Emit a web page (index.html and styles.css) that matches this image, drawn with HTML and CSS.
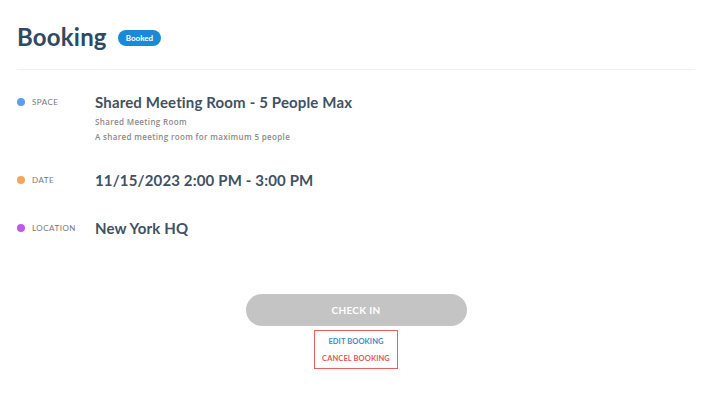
FILE: index.html
```html
<!DOCTYPE html>
<html>
<head>
<meta charset="utf-8">
<link rel="stylesheet" href="styles.css">
</head>
<body>
<div class="page">
  <header class="head">
    <h1 class="title">Booking</h1>
    <span class="badge">Booked</span>
  </header>
  <div class="rows">
    <div class="row row-space">
      <div class="label"><span class="dot dot-blue"></span><span class="label-text">SPACE</span></div>
      <div class="value">
        <div class="main">Shared Meeting Room - 5 People Max</div>
        <div class="sub first">Shared Meeting Room</div>
        <div class="sub">A shared meeting room for maximum 5 people</div>
      </div>
    </div>
    <div class="row row-date">
      <div class="label"><span class="dot dot-orange"></span><span class="label-text">DATE</span></div>
      <div class="value"><div class="main">11/15/2023 2:00 PM - 3:00 PM</div></div>
    </div>
    <div class="row row-loc">
      <div class="label"><span class="dot dot-purple"></span><span class="label-text">LOCATION</span></div>
      <div class="value"><div class="main">New York HQ</div></div>
    </div>
  </div>
  <div class="actions">
    <button class="checkin">CHECK IN</button>
    <div class="links">
      <a class="link edit">EDIT BOOKING</a>
      <a class="link cancel">CANCEL BOOKING</a>
    </div>
  </div>
</div>
</body>
</html>
```
FILE: styles.css
```css
* { box-sizing: border-box; }
html, body { margin: 0; padding: 0; background: #fff; }
body { font-family: "Lato", "Noto Sans", sans-serif; }
.page { padding: 0 16px 0 17px; width: 711px; }
.head {
  display: flex; align-items: center; gap: 11px;
  height: 70px; padding-top: 4px;
  border-bottom: 1px solid #f0f0f0;
}
.title { margin: 0; font-size: 24px; font-weight: 700; color: #2e4a62; letter-spacing: 0.2px; }
.badge {
  background: #1b8ad6; color: #fff; font-size: 8px; font-weight: 700;
  border-radius: 9px; padding: 3px 8px; line-height: 10px; margin-top: 2px;
}
.rows { padding-top: 23px; }
.row { display: flex; }
.row-space { height: 78px; }
.row-date { height: 48px; }
.label { width: 78px; display: flex; align-items: center; height: 18px; gap: 7px; }
.dot { width: 8px; height: 8px; border-radius: 50%; }
.dot-blue { background: #5c9ef0; }
.dot-orange { background: #f6a65c; }
.dot-purple { background: #bf5ae8; }
.label-text { font-size: 8px; color: #777; letter-spacing: 0.5px; }
.main { font-size: 15px; font-weight: 700; color: #3f5163; line-height: 18px; letter-spacing: 0.15px; }
.sub { font-family: "Open Sans", "Lato", sans-serif; font-size: 8px; font-weight: 600; color: #8a8a8a; line-height: 15px; letter-spacing: 0.35px; }
.sub.first { margin-top: 3px; }
.actions { display: flex; flex-direction: column; align-items: center; padding-top: 57px; }
.checkin {
  width: 221px; height: 32px; border: none; border-radius: 16px;
  background: #c4c4c4; color: #fff; font-family: "Lato", sans-serif;
  font-size: 10px; font-weight: 700; letter-spacing: 0.3px;
}
.links {
  margin-top: 4px; border: 1px solid #e46262; width: 84px; height: 39px;
  display: flex; flex-direction: column; align-items: center; justify-content: space-around;
  padding: 2px 0 1px;
}
.link { font-size: 7.5px; font-weight: 700; letter-spacing: 0.1px; }
.edit { color: #3a8ad0; }
.cancel { color: #e05a5a; }
```
